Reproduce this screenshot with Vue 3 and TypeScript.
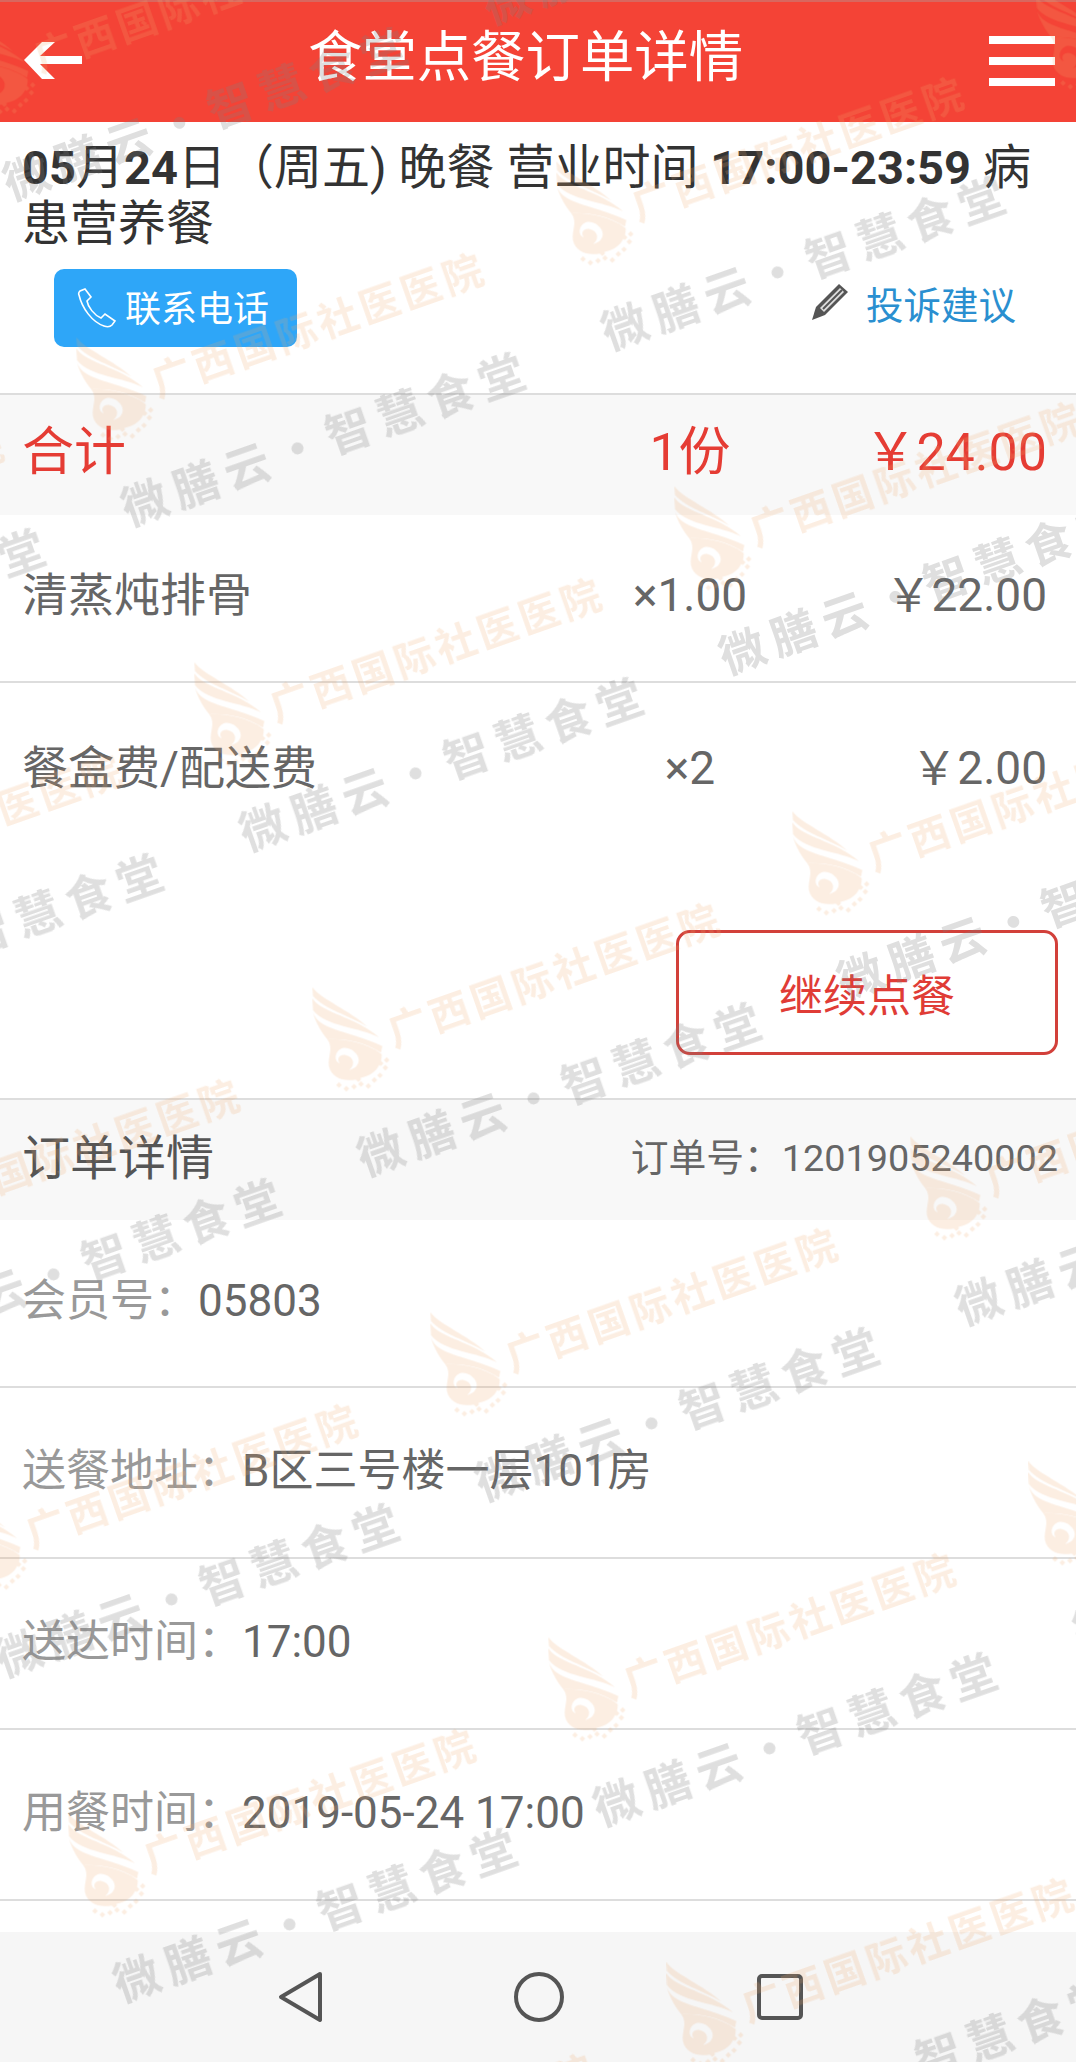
<script setup lang="ts">
interface Row { label: string; value: string }
interface Tile { x: number; y: number }

const details: Row[] = [
  { label: '会员号：', value: '05803' },
  { label: '送餐地址：', value: 'B区三号楼一层101房' },
  { label: '送达时间：', value: '17:00' },
  { label: '用餐时间：', value: '2019-05-24 17:00' },
]

// watermark repeats on a skewed lattice, anchored on one logo centre
const tiles: Tile[] = []
for (let i = -6; i <= 8; i++) {
  for (let j = -6; j <= 8; j++) {
    const x = 351 + 118 * i + 480 * j
    const y = 1040 + 325 * i - 176 * j
    if (x > -500 && x < 1300 && y > -150 && y < 2350) tiles.push({ x, y })
  }
}

const beads = [
  [120, 315], [142, 326], [165, 320], [186, 312], [208, 318], [226, 300],
  [243, 286], [259, 263], [263, 240], [245, 250], [178, 298],
]
</script>

<template>
  <div class="page">
    <header class="topbar">
      <svg class="back" width="58" height="38" viewBox="0 0 58 38">
        <path d="M0 19 18 1H31L16 15H58V23H16L31 38H18Z" fill="#fff" />
      </svg>
      <h1 class="title">食堂点餐订单详情</h1>
      <div class="burger"><i></i><i></i><i></i></div>
    </header>

    <section class="info">
      <p class="headline"><b>05</b>月<b>24</b>日（周五) 晚餐 营业时间 <b>17:00-23:59</b> 病患营养餐</p>
      <div class="links">
        <a class="call">
          <svg width="40" height="40" viewBox="0 0 40 40">
            <path d="M2 7C1 5 2 4 3 3L8 1 14 9 10 13C11 19 17 27 24 30L28 26 38 33 35 37C33 39 30 39 27 38 15 34 5 20 2 7Z" fill="none" stroke="#fff" stroke-width="1.6" />
          </svg>
          联系电话
        </a>
        <a class="complain">
          <svg width="38" height="38" viewBox="0 0 38 38">
            <path d="M1 37 5 24 28 1 37 9 14 32Z" fill="#555" />
            <path d="M9 25 29 5 33 9 13 29Z" fill="#ddd" />
            <path d="M12 26 31 7" stroke="#555" stroke-width="2" />
          </svg>
          <span>投诉建议</span>
        </a>
      </div>
    </section>

    <div class="band total">
      <span>合计</span>
      <span class="qty">1份</span>
      <span class="price">￥24.00</span>
    </div>
    <div class="item lined">
      <span>清蒸炖排骨</span>
      <span class="qty">×1.00</span>
      <span class="price">￥22.00</span>
    </div>
    <div class="item">
      <span>餐盒费/配送费</span>
      <span class="qty">×2</span>
      <span class="price">￥2.00</span>
    </div>

    <div class="actions">
      <button class="more">继续点餐</button>
    </div>

    <div class="band order">
      <span class="order-title">订单详情</span>
      <span class="order-no">订单号：1201905240002</span>
    </div>
    <div v-for="d in details" :key="d.label" class="detail">
      <span class="label">{{ d.label }}</span>{{ d.value }}
    </div>

    <nav class="navbar">
      <svg width="44" height="52" viewBox="0 0 44 52">
        <path d="M42 3 3 26 42 49Z" fill="none" stroke="#555" stroke-width="4" stroke-linejoin="round" />
      </svg>
      <svg width="52" height="52" viewBox="0 0 52 52">
        <circle cx="26" cy="26" r="23" fill="none" stroke="#555" stroke-width="4" />
      </svg>
      <svg width="48" height="48" viewBox="0 0 48 48">
        <rect x="3" y="3" width="42" height="42" rx="3" fill="none" stroke="#555" stroke-width="4" />
      </svg>
    </nav>

    <svg class="watermark" width="1076" height="2062" viewBox="0 0 1076 2062">
      <g v-for="t in tiles" :key="t.x + '_' + t.y" :transform="`translate(${t.x} ${t.y})`">
        <g class="wm-orange">
          <g transform="translate(-52 -60) scale(0.3333)">
            <path d="M40 22C70 60 150 90 205 140 150 105 80 90 42 48Z" />
            <path d="M40 55C70 100 170 110 240 172 180 140 80 140 42 90Z" />
            <path d="M42 98C60 150 140 150 250 198L246 218C190 180 120 175 85 178 70 160 50 130 42 98Z" />
            <path fill-rule="evenodd" d="M85 178C120 175 200 185 248 222 250 255 225 285 190 292 150 310 100 300 90 260 85 230 105 205 85 178ZM128 205C105 215 105 245 122 250 112 235 122 222 140 225 165 230 170 255 150 270 180 265 190 235 165 215 155 205 140 202 128 205Z" />
            <rect v-for="(b, i) in beads" :key="i" :x="b[0] - 6" :y="b[1] - 6" width="12" height="12" :transform="`rotate(45 ${b[0]} ${b[1]})`" />
          </g>
          <text class="wm-org" transform="translate(57 -13) rotate(-19.4)" x="-20" y="14">广西国际社医医院</text>
        </g>
        <text class="wm-gray" transform="translate(-88 -212) rotate(-19.4)" x="-23" y="16">微膳云•智慧食堂</text>
      </g>
    </svg>
  </div>
</template>

<style scoped>
.page {
  position: relative;
  width: 1076px;
  height: 2062px;
  overflow: hidden;
  display: flex;
  flex-direction: column;
  background: #fff;
  color: #666;
  font-family: Roboto, "Noto Sans CJK SC", sans-serif;
}
.topbar {
  flex: none;
  box-sizing: border-box;
  height: 122px;
  border-top: 2px solid #d8675f;
  background: #f44336;
  display: flex;
  align-items: center;
  padding: 0 21px 0 24px;
}
.back { flex: none; margin-top: -4px; }
.title {
  flex: 1;
  margin: 0;
  padding: 0 20px 8px 0;
  text-align: center;
  color: #fff;
  font-size: 54.4px;
  font-weight: 400;
  line-height: 64px;
}
.burger {
  flex: none;
  width: 66px;
  display: flex;
  flex-direction: column;
  gap: 13px;
  margin-top: -3px;
}
.burger i {
  display: block;
  height: 8px;
  background: #fff;
}

.info { flex: none; padding: 18px 22px 0; height: 271px; box-sizing: border-box; }
.headline {
  margin: 0;
  font-size: 48px;
  line-height: 56px;
  color: #333;
}
.headline b { font-size: 47px; }
.links {
  display: flex;
  justify-content: space-between;
  align-items: center;
  margin: 17px 38px 0 32px;
}
.call {
  display: flex;
  align-items: center;
  gap: 8px;
  box-sizing: border-box;
  width: 243px;
  height: 78px;
  padding: 0 0 4px 23px;
  border-radius: 10px;
  background: #2ea6f8;
  color: #fff;
  font-size: 36px;
}
.call svg { margin-top: 4px; }
.complain {
  display: flex;
  align-items: center;
  gap: 17px;
  padding-bottom: 12px;
  color: #2a8fd0;
  font-size: 37.5px;
}

.band {
  flex: none;
  box-sizing: border-box;
  height: 122px;
  border-top: 2px solid #ddd;
  background: #f8f8f8;
}
.total, .item {
  display: grid;
  grid-template-columns: 1fr 160px 277px;
  align-items: center;
  padding: 0 29px 0 22px;
  line-height: 64px;
}
.total { color: #e53c34; font-size: 52px; padding-bottom: 4px; }
.qty { text-align: center; }
.price { text-align: right; }
.item {
  flex: none;
  box-sizing: border-box;
  height: 166px;
  padding-bottom: 6px;
  font-size: 46px;
}
.item.lined { height: 168px; padding-bottom: 7px; border-bottom: 2px solid #ddd; }
.item + .item { padding-top: 5px; padding-bottom: 2px; }

.actions {
  flex: none;
  display: flex;
  justify-content: flex-end;
  padding: 81px 18px 43px 0;
}
.more {
  box-sizing: border-box;
  width: 382px;
  height: 125px;
  border: 3px solid #d2403a;
  border-radius: 14px;
  background: transparent;
  color: #e03c36;
  font-family: inherit;
  font-size: 44px;
}

.order {
  display: flex;
  justify-content: space-between;
  align-items: center;
  padding: 0 18px 12px 22px;
}
.order-title { font-size: 48px; color: #555; }
.order-no { font-size: 37.8px; }

.detail {
  flex: none;
  box-sizing: border-box;
  height: 171px;
  display: flex;
  align-items: center;
  padding: 0 0 4px 22px;
  border-bottom: 2px solid #ddd;
  font-size: 44px;
  line-height: 60px;
  white-space: pre;
}
.order + .detail { height: 168px; padding-bottom: 4px; }
.label { color: #999; }

.navbar {
  flex: none;
  margin-top: auto;
  height: 130px;
  box-sizing: border-box;
  background: #f6f6f6;
  display: flex;
  align-items: center;
  gap: 191px;
  padding-left: 278px;
}

.watermark {
  position: absolute;
  left: 0;
  top: 0;
  pointer-events: none;
}
.wm-orange { fill: #f0aa6e; opacity: 0.2; }
.wm-org {
  font-family: "Noto Sans CJK SC", sans-serif;
  font-size: 40px;
  font-weight: 700;
  letter-spacing: 4px;
}
.wm-gray {
  fill: #808080;
  opacity: 0.25;
  font-family: "Noto Sans CJK SC", sans-serif;
  font-size: 46px;
  font-weight: 700;
  letter-spacing: 8px;
}
</style>
